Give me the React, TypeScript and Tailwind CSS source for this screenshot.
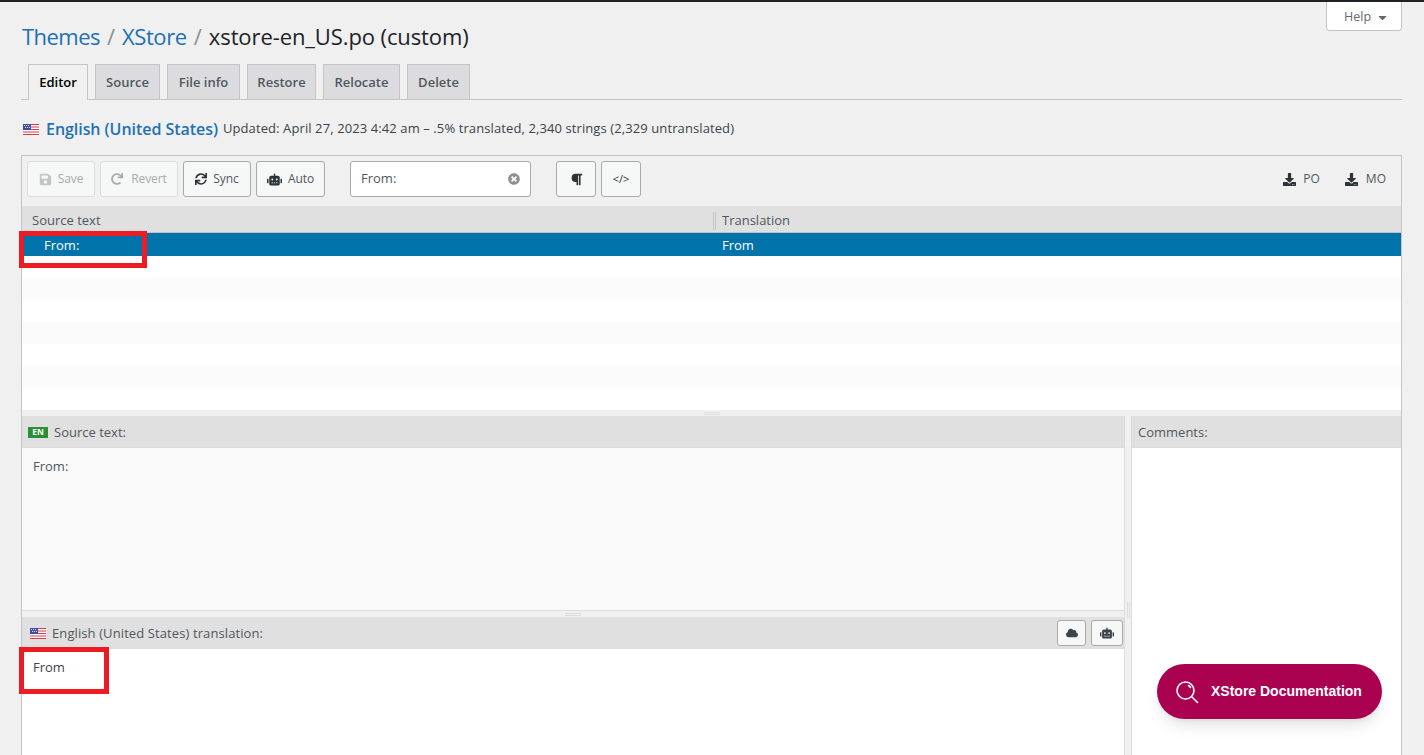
import React from 'react';
import { FaSave, FaRedo, FaSync, FaRobot, FaTimesCircle, FaParagraph, FaDownload, FaCloud, FaCaretDown } from 'react-icons/fa';

const FONT = "font-['Open_Sans','Noto_Sans',sans-serif]";

const UsFlag = () => (
  <svg width="16" height="11" viewBox="0 0 16 11" className="shrink-0">
    <rect width="16" height="11" fill="#fff" />
    <rect y="0" width="16" height="1" fill="#d8394b" />
    <rect y="2.5" width="16" height="1" fill="#d8394b" />
    <rect y="5" width="16" height="1" fill="#d8394b" />
    <rect y="7.5" width="16" height="1" fill="#d8394b" />
    <rect y="10" width="16" height="1" fill="#d8394b" />
    <rect width="8" height="6" fill="#3c4fa5" />
    <g fill="#dfe3f5">
      <rect x="1" y="1" width="1" height="1" />
      <rect x="3" y="1" width="1" height="1" />
      <rect x="5" y="1" width="1" height="1" />
      <rect x="2" y="3" width="1" height="1" />
      <rect x="4" y="3" width="1" height="1" />
      <rect x="6" y="3" width="1" height="1" />
    </g>
  </svg>
);

const tabs = ['Source', 'File info', 'Restore', 'Relocate', 'Delete'];
const tabWidths = ['w-[65px]', 'w-[73px]', 'w-[69px]', 'w-[77px]', 'w-[63px]'];

const ToolButton = ({ children, disabled, className }: { children: React.ReactNode; disabled?: boolean; className?: string }) => (
  <button
    className={`h-9 flex items-center justify-center gap-1.5 rounded-[3px] border bg-[#f6f7f7] text-[12px] tracking-[-0.1px] ${
      disabled ? 'border-[#dcdcde] text-[#a7aaad]' : 'border-[#a7aaad] text-[#50575e]'
    } ${className || ''}`}
  >
    {children}
  </button>
);

export default function App() {
  return (
    <div className={`relative h-[755px] overflow-hidden bg-[#f0f0f1] text-[#3c434a] ${FONT}`}>
      <div className="h-0.5 bg-[#1d2327]" />

      {/* Help tab */}
      <div className="absolute right-[22px] top-0.5 flex h-[29px] w-[76px] items-center gap-[5px] rounded-b-[4px] border border-t-0 border-[#c3c4c7] bg-white pl-[17px] pt-[2px] text-[12.5px] text-[#646970]">
        Help
        <FaCaretDown className="h-[13px] w-[13px]" />
      </div>

      <div className="pl-[21px] pr-[22px]">
        <h1 className="ml-px flex h-[62px] items-center gap-[7px] pb-[8px] pt-[14px] text-[22px] text-[#1d2327]">
          <span className="tracking-[-0.55px] text-[#2271b1]">Themes</span>
          <span className="text-[#8c8f94]">/</span>
          <span className="tracking-[-0.4px] text-[#2271b1]">XStore</span>
          <span className="text-[#8c8f94]">/</span>
          <span className="tracking-[-0.1px]">xstore-en_US.po (custom)</span>
        </h1>

        {/* Tabs */}
        <div className="flex h-9 gap-[7px] border-b border-[#c3c4c7] pl-[7px]">
          <div className="-mb-px flex h-9 w-[60px] items-center justify-center border border-b-0 border-[#c3c4c7] bg-[#f0f0f1] pt-px text-[13px] font-semibold text-black">
            Editor
          </div>
          {tabs.map((t, i) => (
            <div
              key={t}
              className={`flex h-[35px] items-center justify-center border border-b-0 border-[#c3c4c7] bg-[#dcdcde] pt-px text-[13px] font-semibold text-[#50575e] ${tabWidths[i]}`}
            >
              {t}
            </div>
          ))}
        </div>

        {/* Language line */}
        <div className="flex h-[55px] items-center pl-[2px] pt-[3px]">
          <UsFlag />
          <span className="ml-[7px] text-[16px] font-semibold tracking-[-0.05px] text-[#2271b1]">English (United States)</span>
          <span className="ml-[5px] text-[13px] tracking-[0.1px] text-[#3c434a]">
            Updated: April 27, 2023 4:42 am – .5% translated, 2,340 strings (2,329 untranslated)
          </span>
        </div>

        {/* Editor box */}
        <div className="flex h-[610px] flex-col border border-b-0 border-[#c3c4c7]">
          <div className="flex h-[50px] shrink-0 items-start pl-[5px] pr-[15px] pt-[5px]">
            <ToolButton disabled className="w-[68px]">
              <FaSave className="h-[13px] w-[13px] text-[#c3c4c7]" />
              <span>Save</span>
            </ToolButton>
            <ToolButton disabled className="ml-[5px] w-[78px]">
              <FaRedo className="h-3 w-3" />
              <span className="ml-0.5">Revert</span>
            </ToolButton>
            <ToolButton className="ml-[5px] w-[68px]">
              <FaSync className="h-3 w-3 text-[#2c3338]" />
              <span>Sync</span>
            </ToolButton>
            <ToolButton className="ml-[5px] w-[69px]">
              <FaRobot className="h-[15px] w-[15px] text-[#2c3338]" />
              <span>Auto</span>
            </ToolButton>
            <div className="ml-[25px] flex h-9 w-[181px] items-center justify-between rounded-[3px] border border-[#a7aaad] bg-white pl-[10px] pr-[10px] text-[13px] text-[#50575e]">
              From:
              <FaTimesCircle className="h-3 w-3 text-[#8c8f94]" />
            </div>
            <ToolButton className="ml-[25px] w-10">
              <FaParagraph className="h-[13px] w-[13px] text-[#2c3338]" />
            </ToolButton>
            <ToolButton className="ml-[5px] w-10">
              <span className="text-[11px] text-[#2c3338]">&lt;/&gt;</span>
            </ToolButton>
            <div className="ml-auto flex h-9 items-center gap-[5px] text-[12px] text-[#50575e]">
              <FaDownload className="h-[13px] w-[13px] text-[#2c3338]" />
              <span className="ml-0.5">PO</span>
              <FaDownload className="ml-5 h-[13px] w-[13px] text-[#2c3338]" />
              <span className="ml-[3px]">MO</span>
            </div>
          </div>

          {/* Strings table */}
          <div className="flex h-[27px] shrink-0 items-center border-b border-[#c3c4c7] bg-[#e0e0e0] pt-[3px] text-[13px] text-[#50575e]">
            <div className="w-[691px] pl-[10px]">Source text</div>
            <div className="h-[18px] w-[3px] border-x border-[#c3c4c7]" />
            <div className="pl-[6px]">Translation</div>
          </div>
          <div className="flex h-[23px] shrink-0 items-center bg-[#0073aa] pt-[2px] text-[13px] text-white">
            <div className="w-[700px] pl-[22px]">From:</div>
            <div>From</div>
          </div>
          <div className="h-[22px] shrink-0 bg-white" />
          <div className="h-[22px] shrink-0 bg-[#fbfbfb]" />
          <div className="h-[22px] shrink-0 bg-white" />
          <div className="h-[22px] shrink-0 bg-[#fbfbfb]" />
          <div className="h-[22px] shrink-0 bg-white" />
          <div className="h-[22px] shrink-0 bg-[#fbfbfb]" />
          <div className="h-[22px] shrink-0 bg-white" />

          {/* Horizontal splitter */}
          <div className="flex h-[6px] shrink-0 items-center justify-center">
            <div className="h-[3px] w-4 border-y border-[#dcdcde]" />
          </div>

          <div className="flex min-h-0 flex-1">
            {/* Source + translation */}
            <div className="flex w-[1103px] flex-col border-r border-[#dcdcde]">
              <div className="flex h-[32px] shrink-0 items-center gap-[6px] border-b border-[#dcdcde] bg-[#e0e0e0] pl-[6px] pt-[2px] text-[13px] text-[#50575e]">
                <span className="flex h-[11px] w-5 items-center justify-center bg-[#2a8f36] text-[8.5px] font-bold text-white">EN</span>
                Source text:
              </div>
              <div className="h-[162px] shrink-0 bg-[#f9f9f9] pl-[11px] pt-[9px] text-[13px] text-[#50575e]">From:</div>
              <div className="flex h-[7px] shrink-0 items-center justify-center border-t border-[#dcdcde]">
                <div className="h-[3px] w-4 border-y border-[#dcdcde]" />
              </div>
              <div className="flex h-[32px] shrink-0 items-center justify-between border-b border-[#dcdcde] bg-[#e0e0e0] pl-[8px] pr-px text-[13px] tracking-[0.1px] text-[#50575e]">
                <div className="flex items-center gap-[6px] pt-[2px]">
                  <UsFlag />
                  English (United States) translation:
                </div>
                <div className="flex gap-[5px]">
                  <div className="flex h-[26px] w-[29px] items-center justify-center rounded-[3px] border border-[#a7aaad] bg-[#f6f7f7]">
                    <FaCloud className="h-3 w-3 text-[#3c434a]" />
                  </div>
                  <div className="flex h-[26px] w-[32px] items-center justify-center rounded-[3px] border border-[#a7aaad] bg-[#f6f7f7]">
                    <FaRobot className="h-[14px] w-[14px] text-[#3c434a]" />
                  </div>
                </div>
              </div>
              <div className="flex-1 bg-white pl-[11px] pt-[9px] text-[13px] text-[#3c434a]">From</div>
            </div>

            {/* Vertical splitter */}
            <div className="flex w-[6px] shrink-0 flex-col items-center">
              <div className="mt-[186px] h-4 w-[3px] border-x border-[#dcdcde]" />
            </div>

            {/* Comments */}
            <div className="flex min-w-0 flex-1 flex-col border-l border-[#dcdcde]">
              <div className="flex h-[32px] shrink-0 items-center border-b border-[#dcdcde] bg-[#e0e0e0] pl-[6px] pt-[2px] text-[13px] text-[#50575e]">
                Comments:
              </div>
              <div className="flex-1 bg-white" />
            </div>
          </div>
        </div>
      </div>

      {/* Red annotation boxes */}
      <div className="absolute left-[19px] top-[231px] h-[37px] w-[128px] border-[5px] border-[#ed1c24]" />
      <div className="absolute left-[19px] top-[647px] h-[47px] w-[90px] border-[5px] border-[#ed1c24]" />

      {/* Docs button */}
      <div className="absolute left-[1157px] top-[664px] flex h-[55px] w-[225px] items-center rounded-full bg-[#a90050] pl-[18px] shadow-lg">
        <svg width="24" height="24" viewBox="0 0 24 24" fill="none" stroke="#fff" strokeWidth="1.6" strokeLinecap="round">
          <circle cx="10.5" cy="10.5" r="8.5" />
          <path d="M17 17l5.5 5.5" />
          <path d="M13.5 5.5a5 5 0 0 1 2 2" />
        </svg>
        <span className="ml-[12px] font-['Liberation_Sans',sans-serif] text-[14px] font-bold text-white">XStore Documentation</span>
      </div>
    </div>
  );
}
